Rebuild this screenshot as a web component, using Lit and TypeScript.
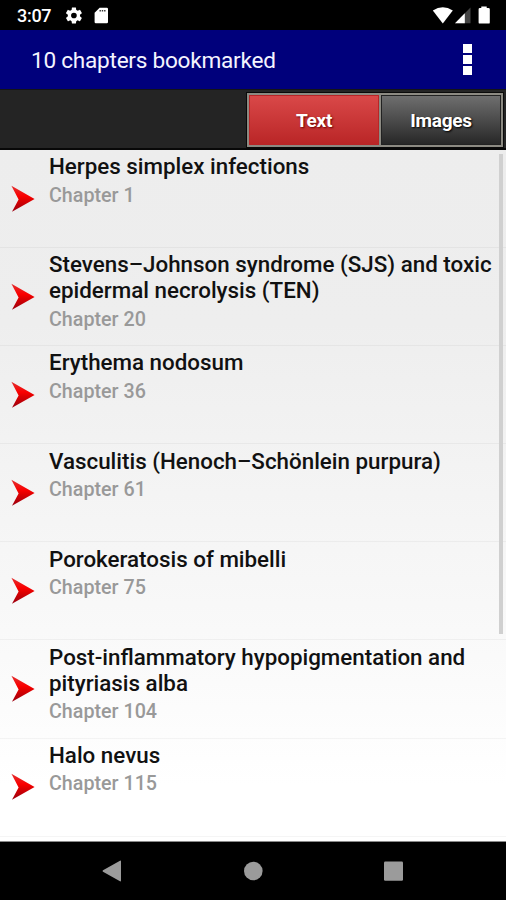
import { LitElement, html, css } from "lit";
import { customElement, property, state } from "lit/decorators.js";
import { classMap } from "lit/directives/class-map.js";

interface Chapter {
  title: string;
  number: number;
}

const CHAPTERS: Chapter[] = [
  { title: "Herpes simplex infections", number: 1 },
  { title: "Stevens–Johnson syndrome (SJS) and toxic epidermal necrolysis (TEN)", number: 20 },
  { title: "Erythema nodosum", number: 36 },
  { title: "Vasculitis (Henoch–Schönlein purpura)", number: 61 },
  { title: "Porokeratosis of mibelli", number: 75 },
  { title: "Post-inflammatory hypopigmentation and pityriasis alba", number: 104 },
  { title: "Halo nevus", number: 115 },
];

@customElement("status-bar")
class StatusBar extends LitElement {
  static styles = css`
    :host {
      display: flex;
      justify-content: space-between;
      height: 30px;
      background: #000;
      color: #fff;
    }
    .time {
      font-size: 18px;
      font-weight: 500;
      line-height: 31px;
      padding-left: 17px;
      width: 48px;
      letter-spacing: -0.3px;
    }
    .group {
      display: flex;
    }
    svg {
      display: block;
    }
  `;
  render() {
    return html`
      <div class="group">
        <div class="time">3:07</div>
        <svg width="50" height="30" viewBox="65 0 50 30">
          <g transform="translate(64.2 5.8) scale(.81)" fill="#fff">
            <path d="M19.43 12.98c.04-.32.07-.64.07-.98s-.03-.66-.07-.98l2.11-1.65c.19-.15.24-.42.12-.64l-2-3.46c-.12-.22-.39-.3-.61-.22l-2.49 1c-.52-.4-1.08-.73-1.69-.98l-.38-2.65C14.46 2.18 14.25 2 14 2h-4c-.25 0-.46.18-.49.42l-.38 2.65c-.61.25-1.17.59-1.69.98l-2.49-1c-.23-.09-.49 0-.61.22l-2 3.46c-.13.22-.07.49.12.64l2.11 1.65c-.04.32-.07.65-.07.98s.03.66.07.98l-2.11 1.65c-.19.15-.24.42-.12.64l2 3.46c.12.22.39.3.61.22l2.49-1c.52.4 1.08.73 1.69.98l.38 2.65c.03.24.24.42.49.42h4c.25 0 .46-.18.49-.42l.38-2.65c.61-.25 1.17-.59 1.69-.98l2.49 1c.23.09.49 0 .61-.22l2-3.46c.12-.22.07-.49-.12-.64zM12 15.5a3.5 3.5 0 1 1 0-7 3.5 3.5 0 0 1 0 7z" />
          </g>
          <path fill="#fff" d="M99.6 7.7H106.8Q108 7.7 108 8.9V22Q108 23.3 106.8 23.3H95.8Q94.6 23.3 94.6 22V12.8Z" />
          <path stroke="#333" stroke-width="1.5" stroke-dasharray="1.4 .9" d="M99.5 10.7H106" />
        </svg>
      </div>
      <svg width="76" height="30" viewBox="430 0 76 30">
        <path fill="#fff" d="M432.8 10.5Q442.8 4 452.8 10.5L442.8 23.5Z" />
        <path fill="#444" d="M470.5 7.5V23.3H455Z" />
        <path fill="#fff" d="M464.8 13.3V23.3H455Z" />
        <path fill="#fff" d="M481.3 6.4H486.7V8H488.4Q489.8 8 489.8 9.2V22.4Q489.8 23.6 488.6 23.6H479.8Q478.6 23.6 478.6 22.4V9.2Q478.6 8 479.9 8H481.3Z" />
      </svg>
    `;
  }
}

@customElement("title-bar")
class TitleBar extends LitElement {
  @property() heading = "";
  static styles = css`
    :host {
      display: flex;
      align-items: center;
      justify-content: space-between;
      height: 59px;
      padding: 0 34px 0 31px;
      background: #00007b;
      color: #f4f4ff;
    }
    .heading {
      font-size: 22.6px;
      line-height: 30px;
      padding-top: 2px;
      letter-spacing: -0.25px;
    }
    .menu {
      display: grid;
      gap: 2px;
    }
    .dot {
      width: 9px;
      height: 9px;
      background: #fff;
    }
  `;
  render() {
    return html`
      <div class="heading">${this.heading}</div>
      <div class="menu"><i class="dot"></i><i class="dot"></i><i class="dot"></i></div>
    `;
  }
}

@customElement("chapter-row")
class ChapterRow extends LitElement {
  @property({ attribute: false }) chapter!: Chapter;
  static styles = css`
    :host {
      display: flex;
      box-sizing: border-box;
      height: 98.1px;
      border-bottom: 1px solid rgba(0, 0, 0, 0.04);
    }
    .arrow {
      flex: none;
      align-self: center;
      margin-left: 11px;
      width: 25px;
      height: 28px;
    }
    .text {
      padding: 3.3px 4px 0 13px;
    }
    .title {
      font-size: 22.37px;
      font-weight: 500;
      line-height: 26px;
      color: #111;
    }
    .number {
      font-size: 19.7px;
      font-weight: 500;
      line-height: 24px;
      margin-top: 4.3px;
      color: #999;
    }
  `;
  render() {
    return html`
      <svg class="arrow" viewBox="0 0 25 28">
        <defs>
          <linearGradient id="red" x1="0" y1="0" x2="0" y2="1">
            <stop offset="0" stop-color="#e23030" />
            <stop offset=".4" stop-color="#fa0000" />
            <stop offset=".55" stop-color="#e00000" />
            <stop offset="1" stop-color="#980010" />
          </linearGradient>
        </defs>
        <path fill="url(#red)" d="M.4 .8L23.6 14L1 26.8L7.6 14.4Z" />
      </svg>
      <div class="text">
        <div class="title">${this.chapter.title}</div>
        <div class="number">Chapter ${this.chapter.number}</div>
      </div>
    `;
  }
}

@customElement("nav-bar")
class NavBar extends LitElement {
  static styles = css`
    :host {
      display: block;
      height: 59px;
      background: #000;
      border-top: 1px solid #8a8a8a;
      box-sizing: border-box;
    }
    svg {
      display: block;
    }
  `;
  render() {
    return html`
      <svg width="506" height="58" viewBox="0 842 506 58" fill="#9b9b9b">
        <path d="M121 861.4V880.6Q121 881.8 120 881.2L103 871.8Q102 871 103 870.2L120 860.8Q121 860.2 121 861.4Z" />
        <circle cx="253.3" cy="871" r="9.3" />
        <rect x="384" y="861.6" width="19" height="19.2" rx="1.2" />
      </svg>
    `;
  }
}

@customElement("app-root")
class AppRoot extends LitElement {
  @state() private tab = "Text";

  static styles = css`
    :host {
      display: flex;
      flex-direction: column;
      width: 506px;
      height: 900px;
      overflow: hidden;
      font-family: Roboto, "Liberation Sans", sans-serif;
    }
    .tabs {
      display: flex;
      justify-content: flex-end;
      box-sizing: border-box;
      height: 61px;
      padding: 3px 3px 0 0;
      background: #242424;
      border-top: 1px solid #151515;
      border-bottom: 2px solid #080808;
    }
    .switch {
      display: flex;
      box-sizing: border-box;
      width: 256px;
      height: 54px;
      border: 2px solid #8c8a82;
      outline: 1px solid #0a0a0a;
    }
    .tab {
      flex: 0 0 120px;
      border: 0;
      padding: 2px 0 0;
      box-shadow: inset 0 0 0 1px #222;
      font: bold 19px / 48px Roboto, sans-serif;
      letter-spacing: -0.3px;
      color: #fff;
      text-shadow: 1px 1px 2px #000;
      background: linear-gradient(#707070, #262626);
    }
    .tab:first-child {
      flex: 1;
      border-right: 2px solid #8c8a82;
    }
    .tab.active {
      background: linear-gradient(#da4949, #b92526);
      box-shadow: inset 0 0 0 1px #b92526;
      text-shadow: 1px 1px 2px #600;
    }
    .list {
      position: relative;
      flex: 1;
      min-height: 0;
      overflow: hidden;
      background: linear-gradient(#ededed 0%, #eeeeee 25%, #f7f7f7 62%, #ffffff 92%);
    }
    .thumb {
      position: absolute;
      right: 3px;
      top: 4px;
      width: 4px;
      height: 480px;
      background: #d0d0d0;
    }
    nav-bar {
      flex: none;
    }
  `;

  render() {
    return html`
      <status-bar></status-bar>
      <title-bar heading="10 chapters bookmarked"></title-bar>
      <div class="tabs">
        <div class="switch">
          ${["Text", "Images"].map(
            (name) => html`<button
              class=${classMap({ tab: true, active: this.tab === name })}
              @click=${() => (this.tab = name)}
            >${name}</button>`
          )}
        </div>
      </div>
      <div class="list">
        ${CHAPTERS.map((c) => html`<chapter-row .chapter=${c}></chapter-row>`)}
        <div class="thumb"></div>
      </div>
      <nav-bar></nav-bar>
    `;
  }
}
